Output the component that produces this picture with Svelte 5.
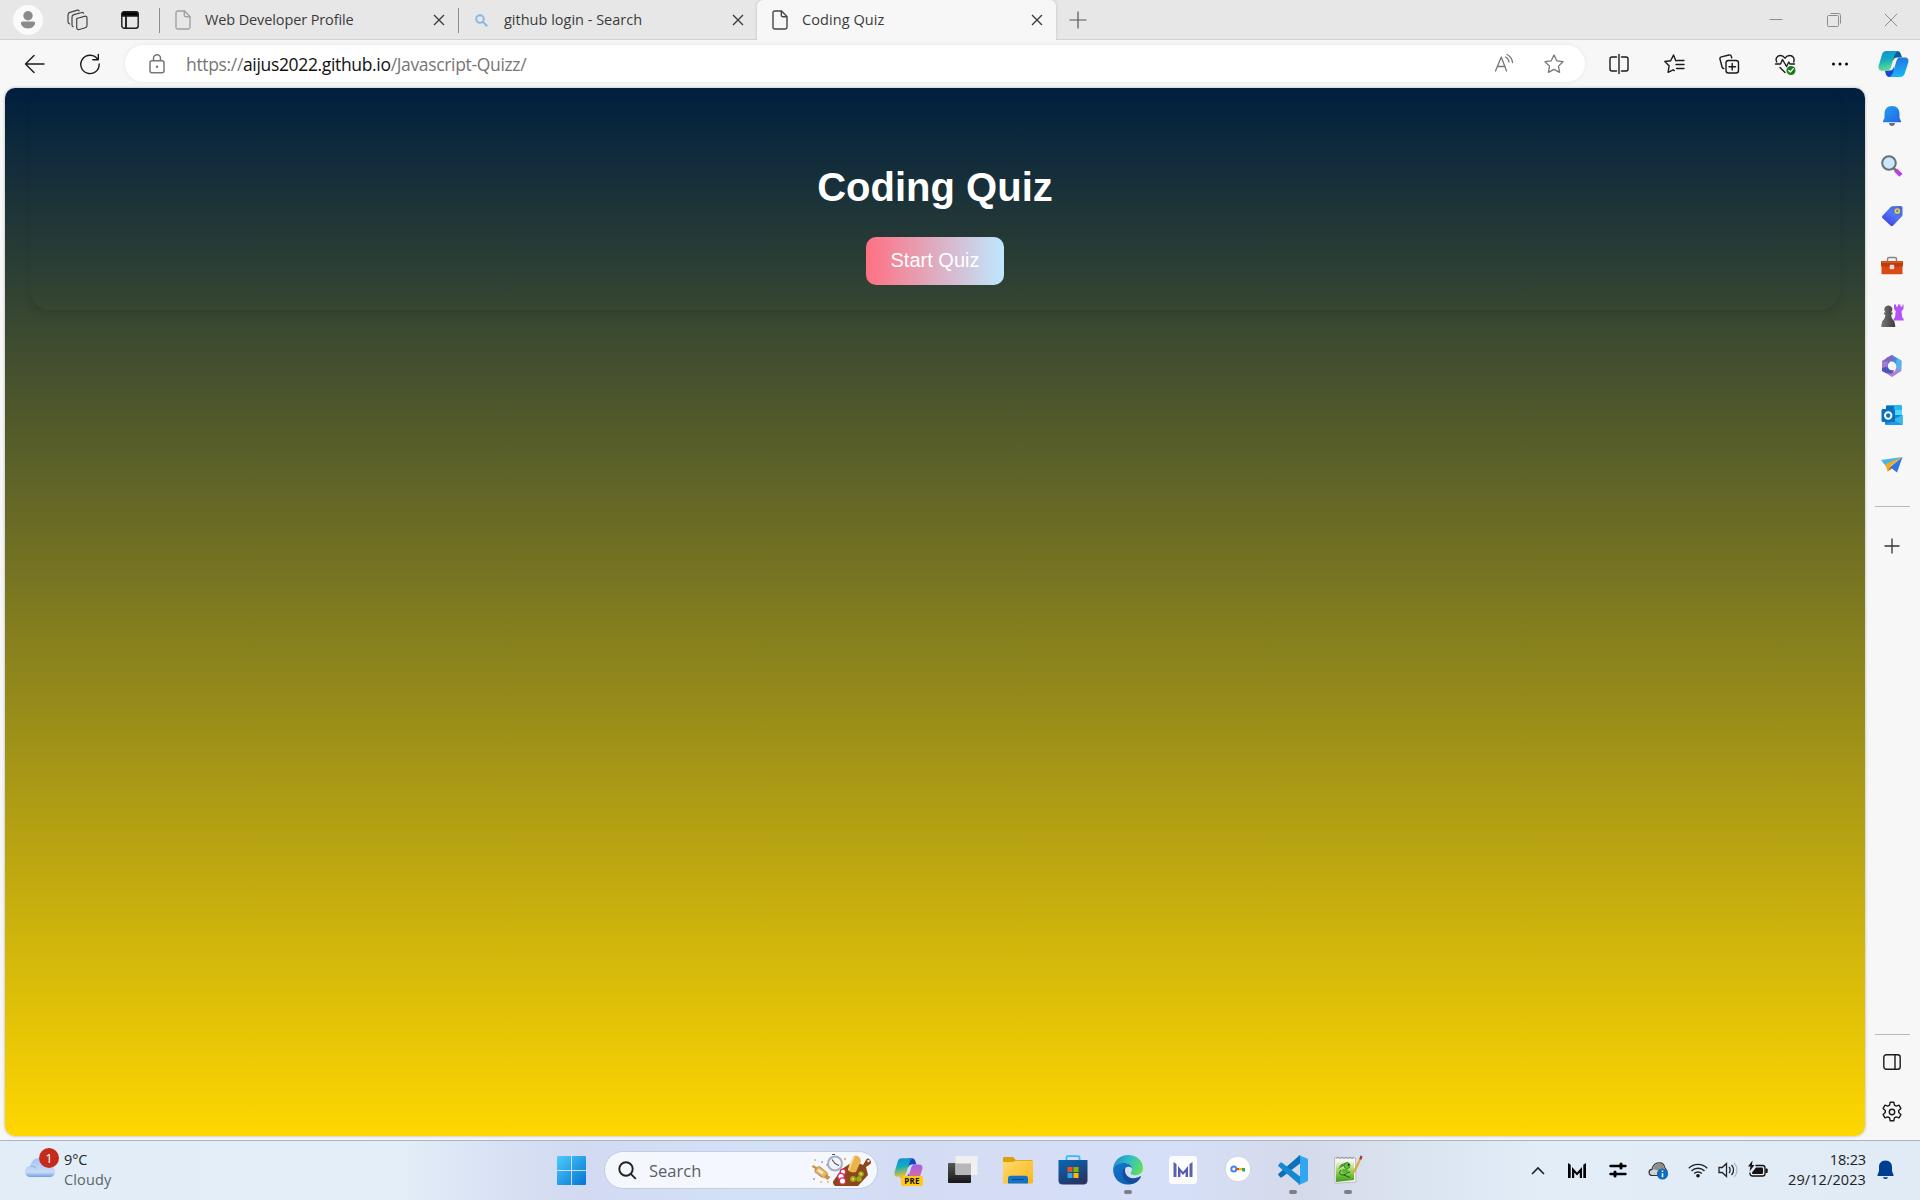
<script>
  const sideApps = ['bell', 'search', 'tag', 'tools', 'games', 'm365', 'outlook', 'send'];
  const apps = ['task', 'folder', 'store', 'edge', 'm', 'key', 'code', 'npp'];
  const running = ['edge', 'code', 'npp'];
</script>

{#snippet cross()}
  <svg class="cross" width="12" height="12" viewBox="0 0 12 12"><path d="M1 1l10 10M11 1L1 11" /></svg>
{/snippet}

{#snippet doc(light)}
  <svg class="doc" class:light width="16" height="20" viewBox="0 0 16 20">
    <path d="M2.7 1h6.8l5.5 5.5V17.3a1.7 1.7 0 0 1-1.7 1.7H2.7A1.7 1.7 0 0 1 1 17.3V2.7A1.7 1.7 0 0 1 2.7 1zM9.3 1v4.3a1.4 1.4 0 0 0 1.4 1.4H15" />
  </svg>
{/snippet}

{#snippet ribbon(p)}
  <svg width="31" height="28" viewBox="0 0 31 28">
    <defs>
      <linearGradient id="{p}a" x1="0" y1="0" x2="0.2" y2="1"><stop offset="0" stop-color="#168bd8" /><stop offset=".5" stop-color="#12adbf" /><stop offset="1" stop-color={p === 'pre' ? '#e8c02b' : '#62dd8c'} /></linearGradient>
      <linearGradient id="{p}b" x1=".4" y1="0" x2=".5" y2="1"><stop offset="0" stop-color={p === 'pre' ? '#9d63ee' : '#2473df'} /><stop offset="1" stop-color={p === 'pre' ? '#f0707c' : '#17b8f7'} /></linearGradient>
    </defs>
    <path d="M15 1h4c2.6 0 3.4 1.7 4 3.5l1 3h-4.7c-2.6 0-3.6 1.5-4.3 3.5z" fill={p === 'pre' ? '#1748bd' : '#0b5c94'} />
    <path d="M15.5 27h-4c-2.3 0-3.2-1.5-3.8-3.5l-.8-3h5c2.5 0 3.5-1.7 4.2-4z" fill="#1648d3" />
    <path d="M8.2 1h12C18 2 17 4 16 7l-3 10c-.7 2.5-2 3.8-4.5 3.8H4C.8 20.8 0 18 .8 15.3L4 4.5C4.700 2.200 6 1 8.200 1z" fill="url(#{p}a)" />
    <path d="M22 27H11.500c2.200-1 3-3 3.800-5.500l3-10.200C19 9 20.200 7.500 22.700 7.500H27c3.200 0 4 2.600 3.200 5.300l-3.500 10.700C26 25.700 24.500 27 22 27z" fill="url(#{p}b)" />
  </svg>
{/snippet}

{#snippet sideIcon(name)}
  <svg width="24" height="24" viewBox="0 0 24 24">
    {#if name === 'bell'}
      <defs><linearGradient id="sb" x2="1" y2="1"><stop stop-color="#22a2ee" /><stop offset="1" stop-color="#2463e4" /></linearGradient></defs>
      <path d="M9 19h6c0 4-6 4-6 0z" fill="#66707c" />
      <path d="M12 2c-5 0-7.500 3.500-7.500 8v4L3 17c-.2.700 0 1.300.8 1.300h16.400c.8 0 1-.6.8-1.300L19.500 14v-4C19.500 5.500 17 2 12 2z" fill="url(#sb)" />
    {:else if name === 'search'}
      <path d="M15.500 16l5.500 5.300" stroke="#c238f5" stroke-width="4.200" />
      <path d="M13.500 14l3 3" stroke="#777" stroke-width="2.500" />
      <circle cx="9" cy="9" r="6.800" fill="#c9e8fb" stroke="#6d6e72" stroke-width="2" />
    {:else if name === 'tag'}
      <defs><linearGradient id="st" x1="1" y1="0" x2=".3" y2="1"><stop stop-color="#3869dd" /><stop offset=".5" stop-color="#5076f5" /><stop offset="1" stop-color="#4140de" /></linearGradient></defs>
      <path d="M12.500 2.200l8-.2c1.300 0 2 .7 2 2v6.500c0 1-.2 1.500-1 2.200l-8.300 8.800c-.9 1-1.800 1-2.700.1l-7.800-7.400c-.9-.9-.9-1.800 0-2.700l8-8.500c.6-.6 1-.8 1.800-.8z" fill="url(#st)" />
      <circle cx="17.300" cy="7" r="2" fill="#5974cf" stroke="#f5ce35" stroke-width="1.700" />
    {:else if name === 'tools'}
      <path d="M7.500 7V5c0-1 .7-1.600 1.700-1.600h5.600c1 0 1.700.6 1.700 1.600v2" fill="none" stroke="#858585" stroke-width="1.500" />
      <rect x="1.500" y="11" width="21" height="9.300" rx="1" fill="#d94a15" />
      <path d="M2 7h20c.7 0 1 .4 1 1v4c-3 1.300-19 1.300-22 0V8c0-.6.3-1 1-1z" fill="#bd3b0d" />
      <path d="M2 7.500h20v1.300H2z" fill="#e56224" />
      <rect x="9.700" y="10.700" width="4.500" height="4.500" rx="1" fill="#ddd" />
    {:else if name === 'games'}
      <defs><linearGradient id="sg" x2="1"><stop stop-color="#777" /><stop offset="1" stop-color="#3d3d3d" /></linearGradient></defs>
      <path d="M14 .5h2v2h2v-2h2.500v2h2v-2h1V5l-2 2 .7 6.500c1.300.6 1.500 1.300 1.500 3H13.500c0-1.700.2-2.400 1.500-3l.7-6.500-1.700-2z" fill="#b652f3" />
      <path d="M8.300 1.500a4 4 0 0 1 2.800 7h1.400v2h-1.300c.1 3 1 5 3 6.500l1 4.500v1.500H1.300v-1.500l1-4.500c2-1.500 3-3.500 3-6.500H4v-2h1.500a4 4 0 0 1 2.800-7z" fill="url(#sg)" />
    {:else if name === 'm365'}
      <path d="M12 1l9.300 5.400v4.500L15.700 12 14 8.300 7 6.500 6 4z" fill="#428de0" />
      <path d="M21.300 7v10L12 23l-5.500-3.500 8.500-2.300 2-6.400z" fill="#b17bd6" />
      <path d="M12 1L2 7v6l6 3 2-8.500 4-2z" fill="#8064c6" />
      <path d="M2 12v5l4 2.200 6 .4 2-3.600-6-2z" fill="#4c55ba" />
      <path d="M2 7.500V14l5-1.500 1-5z" fill="#a57bd2" />
      <path d="M17 4l4.300 2.700V15l-3.500 2.500L16 9z" fill="#56b5e8" />
      <circle cx="12" cy="12" r="4.200" fill="#f7f7f7" />
    {:else if name === 'outlook'}
      <rect x="6" y="1" width="16" height="11" rx="1.200" fill="#27b7ee" />
      <path d="M6 2h8v5H6z" fill="#0f6db9" /><path d="M14 6h8v6h-8z" fill="#4fd9ff" />
      <path d="M5 11h17.500v9.800H5z" fill="#1588d3" /><path d="M12 16l10.500-5v9.800z" fill="#35b9ee" /><path d="M14 16l8.500 5H6z" fill="#1c9ce3" />
      <rect x="1.500" y="5" width="13.500" height="13" rx="1.500" fill="#0970c4" />
      <circle cx="8.200" cy="11.500" r="3.200" fill="none" stroke="#fff" stroke-width="2" />
    {:else}
      <path d="M1 6L22.500 3 6.500 13z" fill="#40b8ed" /><path d="M22.500 3L17 18.500 10 13z" fill="#2d75e4" />
      <path d="M22.500 3L5.500 10l2 7.500L10.500 12z" fill="#f5a91b" /><path d="M7.500 17.500l4.500-3-1.800-2z" fill="#b76a0d" />
    {/if}
  </svg>
{/snippet}

{#snippet appIcon(name)}
  <svg width="30" height="30" viewBox="0 0 30 30">
    {#if name === 'task'}
      <defs><linearGradient id="tk" x1="0" y1="0" x2="0" y2="1"><stop stop-color="#565656" /><stop offset="1" stop-color="#171717" /></linearGradient></defs>
      <rect x="0" y="8" width="23" height="20" rx="1" fill="url(#tk)" />
      <rect x="7.500" y="1" width="22" height="19" rx="1" fill="#f0f0f0" />
      <path d="M7.500 8.500H23V20H8.500a1 1 0 0 1-1-1z" fill="#b7b7b7" />
    {:else if name === 'folder'}
      <defs><linearGradient id="fo" x2="1" y2="1"><stop stop-color="#ffdb70" /><stop offset="1" stop-color="#fdb517" /></linearGradient></defs>
      <path d="M0 3.500C0 2.500.6 2 1.500 2H9c1 0 1.500.3 2.100 1l1.600 2H28c1 0 2 .5 2 1.500V12H0z" fill="#dca008" />
      <path d="M0 8c0-.6.4-1 1-1h8.500c1 0 1.600-.2 2.400-.8l.6-.4H29c.6 0 1 .4 1 1V27c0 .9-.5 1.500-1.500 1.500h-27C.5 28.500 0 28 0 27z" fill="url(#fo)" />
      <path d="M5 28.500V23.500c0-1.700 1-2.700 2.700-2.700h14.600c1.700 0 2.700 1 2.700 2.700v5z" fill="#1174c9" /><path d="M9 24.500h12" stroke="#0a4b8d" stroke-width="1.200" />
    {:else if name === 'store'}
      <defs><linearGradient id="so" y2="1" x2=".5"><stop stop-color="#0868b8" /><stop offset="1" stop-color="#263563" /></linearGradient></defs>
      <path d="M8.500 6V2.500c0-.8.5-1.300 1.300-1.300h10.400c.8 0 1.300.5 1.300 1.300V6" fill="none" stroke="#33bdf2" stroke-width="1.800" />
      <path d="M.5 5h29v20.500c0 2.500-1.500 4-4 4h-21c-2.500 0-4-1.500-4-4z" fill="url(#so)" />
      <path d="M9.500 12h5v5h-5z" fill="#f25022" /><path d="M15.500 12h5v5h-5z" fill="#7fba00" /><path d="M9.500 18h5v5h-5z" fill="#28a8ea" /><path d="M15.500 18h5v5h-5z" fill="#ffb901" />
    {:else if name === 'edge'}
      <defs>
        <linearGradient id="e1" x1="0" y1=".3" x2="1" y2=".6"><stop stop-color="#238fcf" /><stop offset=".5" stop-color="#32bfc3" /><stop offset="1" stop-color="#62df57" /></linearGradient>
        <linearGradient id="e2" x1="0" y1="0" x2=".6" y2="1"><stop stop-color="#1475cb" /><stop offset="1" stop-color="#0b61b5" /></linearGradient>
      </defs>
      <path d="M.2 13.500C1 5.500 7 0 15 0c9 0 15 6 15 13 0 4.500-3.300 7.200-7.600 7.200-3.300 0-5.300-1.200-4.800-2.700.8-.8 1.500-2 1.500-3.500 0-3.500-3.500-6-7.500-6C6.700 8 2.500 10.500.2 13.500z" fill="url(#e1)" />
      <path d="M.2 13.500C2 10 6.500 8 11.200 8c4.500 0 7.900 2.500 7.900 6 0 0-.9-2.200-3.600-2.200-4.500 0-7 6.200-3.300 11.200 2.300 3.200 6.500 5.300 11 4.200C12.500 33.500-.8 26.500.2 13.500z" fill="url(#e2)" />
      <path d="M9.500 18c0-2 1-4.600 3-5.500-2 5.500 2 10.700 7.500 10.700 3.500 0 5.500-1 7-1.900.6-.3 1.200.3.800.9C25.500 27 19.500 30.300 15.500 28 11.500 26.500 9.500 22 9.500 18z" fill="#124e9b" />
    {:else if name === 'm'}
      <rect x="1" y="1" width="28" height="28" rx="3.500" fill="#fcfcfe" />
      <path d="M5.500 7l3 2v13h-3zM24.500 7l-3 2v13h3z" fill="#5a61ad" /><path d="M10 22V11l5 6 5-6v11h-2.400v-5L15 20l-2.600-3v5z" fill="#5459ab" />
    {:else if name === 'key'}
      <circle cx="15" cy="14" r="12.700" fill="#fff" stroke="#c6cad5" stroke-width=".7" />
      <circle cx="10.800" cy="14" r="2.500" fill="none" stroke="#4285f4" stroke-width="2" />
      <path d="M13.500 13h3v2.200h-3z" fill="#ea4335" /><path d="M16 13h3v2.200h-3z" fill="#fbbc05" /><path d="M19 13h3v3.500h-2.800z" fill="#34a853" />
    {:else if name === 'code'}
      <path d="M22 0v8.500L4 22.200c-.6.500-1.300.5-1.800 0L.7 20.600c-.7-.6-.7-1.400 0-2z" fill="#0b6fb9" />
      <path d="M22 30v-8.500L4 7.800c-.6-.5-1.300-.5-1.800 0L.7 9.400c-.7.600-.7 1.400 0 2z" fill="#1489d2" />
      <path d="M21.500.2L29 3.500c.7.300 1 .8 1 1.500v20c0 .7-.3 1.200-1 1.500l-7.500 3.300c-.8.300-1.500 0-2-.6 1 .6 2.500 0 2.500-1.200V2c0-1.200-1.500-1.800-2.500-1.200.5-.6 1.200-.9 2-.6z" fill="#31a7f1" />
    {:else}
      <defs><linearGradient id="np" y2="1" x2="0"><stop stop-color="#e8f5d8" /><stop offset=".5" stop-color="#8fd04e" /><stop offset="1" stop-color="#3f9a1c" /></linearGradient></defs>
      <path d="M1.500 3h21l.5 24-21 1.300z" fill="#f5f5f2" stroke="#9c9c99" stroke-width=".6" />
      <path d="M3 7h18v18L3 27z" fill="url(#np)" />
      <path d="M6 13.500c2-3 6-4 9.500-2.500M8 15c-2 2-2 5 2 5 4-.3 3-3 7-3M7 11.500c2-3 5-3 7-1.500M11 20l6 2.500" fill="none" stroke="#1f5a18" stroke-width="1" />
      <circle cx="14" cy="10.500" r="3" fill="#63c43c" stroke="#24691b" stroke-width=".7" /><circle cx="15.500" cy="9.800" r=".9" fill="#111" />
      <path d="M9 14.500c2-1 5-1 6 .5s-2 3-4 3-3-2-2-3.500z" fill="#55b832" />
      <path d="M3 3l2-1 2 1.500L9 2l2 1.500L13 2l2 1.500L17 2l2 1.500L21 2" stroke="#888" fill="none" stroke-width=".8" />
      <path d="M19.500 20l1-4.500L26.500 3l2 .8-6 13z" fill="#e3a43f" /><path d="M26.300 4L27.500.5l2 .8-1 3.500z" fill="#913d36" />
    {/if}
  </svg>
{/snippet}

<div class="screen">
  <header class="tabs">
    <div class="tools">
      <span class="avatar"><svg width="30" height="30" viewBox="0 0 30 30"><circle cx="15" cy="10.700" r="4.700" /><path d="M9.700 16.500h10.600c1.300 0 1.900.7 1.700 1.800-.4 3.200-3.200 5.200-7 5.200s-6.600-2-7-5.200c-.2-1.100.4-1.800 1.700-1.800z" /></svg></span>
      <svg class="line-icon soft" width="22" height="22" viewBox="0 0 22 22"><path d="M9.700 9.500l7.800-2.200c1.600-.4 2.500.3 2.500 1.800v7.400c0 1.200-.5 1.900-1.700 2.200l-6 1.800c-1.600.4-2.600-.3-2.600-1.900zM6.200 17.700c-.8-.3-1.200-.9-1.200-1.800V8.200c0-1.400.6-2.200 1.900-2.500L15 3.500q1-.2 1.600.8M2.700 15C1.500 14.500 1 13.900 1 12.800V6C1 4.500 1.600 3.700 2.900 3.400L10.500 1.200q1-.2 1.600.7" /></svg>
      <svg class="line-icon panel" width="18" height="18" viewBox="0 0 18 18"><rect x=".8" y=".8" width="16.400" height="16.400" rx="2.500" /><path class="fill" d="M1 5V3a2 2 0 0 1 2-2h12a2 2 0 0 1 2 2v2zM4.800 5v12h.4V5z" /></svg>
    </div>
    <div class="tab first">{@render doc(true)}<span class="title t1">Web Developer Profile</span>{@render cross()}</div>
    <div class="tab second">
      <svg class="mag" width="13" height="13" viewBox="0 0 13 13"><circle cx="5" cy="5" r="3.800" /><path d="M8 8l4.300 4.300" /></svg>
      <span class="title t2">github login - Search</span>{@render cross()}
    </div>
    <div class="tab active">{@render doc(false)}<span class="title t3">Coding Quiz</span>{@render cross()}</div>
    <svg class="plus" width="18" height="18" viewBox="0 0 18 18"><path d="M9 .5v17M.5 9h17" /></svg>
    <div class="window">
      <svg width="14" height="14" viewBox="0 0 14 14"><path d="M.5 6.500h13" /></svg>
      <svg width="14" height="14" viewBox="0 0 14 14"><rect x=".5" y="2.500" width="11" height="11" rx="1" /><path d="M3.500.5h8a2 2 0 0 1 2 2v8" /></svg>
      <svg width="14" height="14" viewBox="0 0 14 14"><path d="M.8.8l12.400 12.400M13.200.8L.8 13.200" /></svg>
    </div>
  </header>

  <nav class="toolbar">
    <svg class="line-icon" width="20" height="20" viewBox="0 0 20 20"><path d="M9 1.500L.5 10 9 18.500M.5 10H19" /></svg>
    <svg class="line-icon reload" width="20" height="20" viewBox="0 0 20 20"><path d="M17.800 5.500A9.200 9.200 0 1 0 19.200 10M18.300.5v5.300h-5.500" /></svg>
    <div class="address">
      <svg class="line-icon grey lock" width="16" height="20" viewBox="0 0 16 20"><rect x="1" y="6.700" width="14" height="12" rx="2" /><path d="M4.500 6.500V4.300a3.500 3.500 0 0 1 7 0v2.200" /><circle class="dot" cx="8" cy="12.700" r="1.200" /></svg>
      <span class="url">https://<b>aijus2022.github.io</b>/Javascript-Quizz/</span>
      <svg class="line-icon grey" width="20" height="20" viewBox="0 0 20 20"><path d="M1.500 17L7.300 3 12.500 17M3.500 12.500h7.500M11.500 3c2 .8 3 2.300 3.500 5M13 .5c3.300 1.500 5 4 5.500 8" /></svg>
      <svg class="line-icon grey" width="20" height="20" viewBox="0 0 20 20"><path d="M10 1l2.800 5.800 6.200.9-4.500 4.400 1.100 6.200L10 15.400l-5.600 2.900 1.100-6.200L1 7.700l6.200-.9z" /></svg>
    </div>
    <div class="actions">
      <svg class="line-icon" width="20" height="20" viewBox="0 0 20 20"><path d="M7.500 3H3a2 2 0 0 0-2 2v10a2 2 0 0 0 2 2h4.500M12.500 3H17a2 2 0 0 1 2 2v10a2 2 0 0 1-2 2h-4.500M10 .5v19" /></svg>
      <svg class="line-icon" width="20" height="20" viewBox="0 0 20 20"><path d="M12.500 6.800h-.7L9.500 1 6.700 6.700.8 7.500l4.300 4.300-1 6.500 5-2.500 1.200.8M13.500 6.500H20M12 10.500h8M12.500 14.500H20" /></svg>
      <svg class="line-icon" width="20" height="20" viewBox="0 0 20 20"><rect x="7" y="6.500" width="12.500" height="12.500" rx="2.500" /><path d="M13.200 9.500v6.500M10 12.700h6.500M4.800 14.500c-.9-.1-1.500-.7-1.700-1.500L1 5.300c-.3-1.200.2-2.100 1.400-2.400L10 1c1.100-.3 1.900.1 2.300 1.300l.4 1.500" /></svg>
      <svg class="line-icon" width="21" height="21" viewBox="0 0 21 21"><path d="M1.800 8C0 5 2 1.500 5.300 1.500c2.200 0 3.500 1 4.700 2.700 1.200-1.700 2.500-2.700 4.700-2.700 3.200 0 5.300 3 4 6.500M.5 10h5l2-4.500 4 7 2.300-4.500 1.200 2h4.500M5 13.500l5 5" /><circle class="ok" cx="16" cy="16.500" r="4.500" /><path class="tick" d="M13.800 16.500l1.500 1.500 3-3.200" /></svg>
      <svg width="18" height="6" viewBox="0 0 18 6"><circle cx="2.500" cy="3" r="1.500" /><circle cx="9" cy="3" r="1.500" /><circle cx="15.500" cy="3" r="1.500" /></svg>
    </div>
    <span class="copilot">{@render ribbon('top')}</span>
  </nav>

  <div class="body">
    <main class="page">
      <section class="card">
        <h1>Coding Quiz</h1>
        <button>Start Quiz</button>
      </section>
    </main>
    <aside class="side">
      {#each sideApps as name}<span class="slot">{@render sideIcon(name)}</span>{/each}
      <hr />
      <svg class="add" width="16" height="16" viewBox="0 0 16 16"><path d="M8 .5v15M.5 8h15" /></svg>
      <div class="bottom">
        <hr />
        <span class="slot"><svg class="line-icon" width="18" height="16" viewBox="0 0 18 16"><rect x=".8" y=".8" width="16.400" height="14.400" rx="2.500" /><path d="M12 1v14" /></svg></span>
        <span class="slot"><svg class="line-icon" width="22" height="22" viewBox="0 0 22 22"><circle cx="11" cy="11" r="2.700" /><path d="M9.200 1.200h3.600l.6 2.900 1.800 1 2.800-.9 1.900 3.200-2.200 2v2.200l2.200 2-1.900 3.200-2.800-.9-1.800 1-.6 2.900H9.200l-.6-2.900-1.800-1-2.800.9-1.900-3.200 2.200-2v-2.200l-2.200-2L4 4.200l2.800.9 1.800-1z" /></svg></span>
      </div>
    </aside>
  </div>

  <footer class="taskbar">
    <div class="weather">
      <svg width="32" height="32" viewBox="0 0 32 32">
        <defs><linearGradient id="cl" x1="0" y1="0" x2="0" y2="1"><stop stop-color="#a5c4f3" /><stop offset=".75" stop-color="#c8dbf6" /><stop offset="1" stop-color="#719ce9" /></linearGradient></defs>
        <path d="M6.500 29C3 29 1 26.500 1 23.500 1 20.500 3.200 18 6.500 18 7 13 10.500 10 15.500 10c5 0 8.500 3.500 9 8 3.500 0 6.500 2.300 6.500 5.500 0 3.300-2 5.500-5.500 5.500z" fill="url(#cl)" />
        <path d="M6.500 18c3 0 4.500 1 5.500 2.500" fill="none" stroke="#87a9e6" />
      </svg>
      <span class="badge">1</span>
      <div class="wtext"><span>9°C</span><span class="dim">Cloudy</span></div>
    </div>

    <div class="dock">
      <svg class="start" width="29" height="29" viewBox="0 0 29 29">
        <defs><linearGradient id="wn" gradientUnits="userSpaceOnUse" x1="0" y1="0" x2="29" y2="29"><stop stop-color="#4ccbfc" /><stop offset="1" stop-color="#0474d2" /></linearGradient></defs>
        <path d="M1 0h13v14H0V1q0-1 1-1zM15 0h13q1 0 1 1v13H15zM0 15h14v14H1q-1 0-1-1zM15 15h14v13q0 1-1 1H15z" fill="url(#wn)" />
      </svg>
      <div class="searchbox">
        <svg class="lens" width="19" height="19" viewBox="0 0 19 19"><circle cx="8" cy="8" r="6.700" /><path d="M12.800 12.800l5 5" /></svg>
        <span>Search</span>
        <svg class="treats" width="62" height="33" viewBox="0 0 62 33">
          <path d="M2 11l3.500 2 3-1 8 6.500.500 3 2.500 1.500-3 3-2.500-2-3.500-.5-7-5.500.3-3.500-3-1.500z" fill="#c98f47" /><path d="M7 12.500l9 6.500-3 4.500-8.500-6z" fill="#e8b96d" /><path d="M8 15l4.500 3.300-1 2.200-5-3.500z" fill="#f7ead0" />
          <g fill="#e9b657"><circle cx="4" cy="6" r="1" /><circle cx="10" cy="28" r="1" /><circle cx="34" cy="5" r="1.200" /><circle cx="17" cy="28" r="1" /></g><g fill="#a995c8"><circle cx="11" cy="8" r="1" /><circle cx="3" cy="25" r="1" /><circle cx="16" cy="11" r="1" /></g>
          <path d="M31 15l12-8 9 4 3-5c1-2 3-2 4 0 2 2 1 4-1 5l-3 2 2 8-10 11H24c-2-2-3-4-1-6z" fill="#8b4717" /><circle cx="57.500" cy="7" r="1.200" fill="#f4edf1" />
          <path d="M37 16l6-14c4-1 6 1 7 5l-5 11c-3 1-7 0-8-2z" fill="#e9b150" /><path d="M43 3c-2.500 5-4.500 9-5 13" stroke="#f7d88c" stroke-width="2" fill="none" />
          <circle cx="24" cy="9.500" r="7" fill="#f1f4fa" stroke="#a8acc5" stroke-width="2" /><path d="M24 9.500l-3-4M24 9.500l4 2M21 .5h3" stroke="#4d506e" stroke-width="1.200" />
          <g fill="#fff" stroke="#d82d5d" stroke-width="1.300"><circle cx="32" cy="18" r="2.800" /><circle cx="30" cy="22.500" r="3.200" /><circle cx="31.500" cy="27" r="3.200" /></g>
          <g fill="#9da51b"><circle cx="42" cy="25" r="3" /><circle cx="48" cy="25" r="2.800" /><circle cx="50" cy="20" r="2.800" /></g><g fill="#dfcf58"><circle cx="42" cy="25" r="1.200" /><circle cx="50" cy="20" r="1.200" /></g>
        </svg>
      </div>
      <span class="pre">{@render ribbon('pre')}<em>PRE</em></span>
      {#each apps as name}
        <span class="app">{@render appIcon(name)}{#if running.includes(name)}<i></i>{/if}</span>
      {/each}
    </div>

    <div class="tray">
      <svg class="chev" width="14" height="9" viewBox="0 0 14 9"><path d="M1 8l6-6 6 6" /></svg>
      <svg class="tm" width="18" height="15" viewBox="0 0 18 15"><path d="M0 0l2.700 1.800V15H0zM18 0l-2.700 1.800V15H18zM4 15V4l5 5.500L14 4v11h-2.200V9.500L9 12.500 6.200 9.500V15z" /></svg>
      <svg class="sw" width="18" height="16" viewBox="0 0 18 16"><path d="M1.500 4h15M1.500 12h15" /><path class="thick" d="M12 2v4M6 10v4" /></svg>
      <svg class="cloud" width="21" height="19" viewBox="0 0 21 19"><path d="M4.500 14.500C0 14.500 0 8.500 4 8.300 4.500 4 8 1.500 11 2c3-.3 5 1.500 5.700 4.500L19 10l-6 4.500z" fill="#d2d2d2" stroke="#333" stroke-width="1.200" /><path d="M5 8C6 3.500 9 2 12 2.500c2.500 0 4.500 2.500 4.500 5L10 9.500z" fill="#8e8e8e" /><circle cx="14.500" cy="13" r="5.600" fill="#0f6cbd" /><path d="M14.500 12.200v4M14.500 9.500v1.400" stroke="#fff" stroke-width="1.500" /></svg>
      <svg class="wifi" width="20" height="16" viewBox="0 0 20 16"><path d="M.8 6.200a13 13 0 0 1 18.400 0M3.500 8.900a9.200 9.200 0 0 1 13 0M6.200 11.500a5.400 5.400 0 0 1 7.600 0" /><circle cx="10" cy="13.700" r="1.800" /></svg>
      <svg class="vol" width="20" height="16" viewBox="0 0 20 16"><path d="M1 5.500h3.200L8.500 1.500v13L4.200 10.500H1zM11 5c1.500 1.500 1.500 4.500 0 6M13.500 3c2.700 2.700 2.700 7.300 0 10" /><path class="faint" d="M16 1c4 4 4 10 0 14" /></svg>
      <svg class="bat" width="20" height="16" viewBox="0 0 20 16"><path d="M7.500 3.500h7.200a2.300 2.300 0 0 1 2.300 2.300v5.900a2.300 2.300 0 0 1-2.300 2.300H4.300A2.300 2.300 0 0 1 2 11.700V10.500" fill="none" stroke="#111" stroke-width="1.300" /><path d="M8 5.500h6q1 0 1 1v4.500q0 1-1 1H5q-1 0-1-1V10.500z" /><path d="M17.500 6.500h1.200q1 0 1 1v2.500q0 1-1 1h-1.200z" /><path d="M4.500-1.500L0 4.500h2.500L1.500 9.500 6.500 3H4z" /></svg>
      <div class="clock"><span>18:23</span><span class="date">29/12/2023</span></div>
      <svg class="bell" width="17" height="20" viewBox="0 0 17 20"><path d="M8.500.5C4 .5 2 3.500 2 7v4L.5 15c-.2.600 0 1 .7 1h14.600c.7 0 .9-.4.7-1L15 11V7C15 3.500 13 .5 8.500.5zM6 17.200h5c-.5 2.400-4.500 2.400-5 0z" /></svg>
    </div>
  </footer>
</div>

<style>
  :global(body) { margin: 0; overflow: hidden; }
  .screen { width: 1920px; height: 1200px; display: flex; flex-direction: column; background: #f7f7f7; font-family: 'Open Sans', 'Noto Sans', sans-serif; color: #3b3b3b; overflow: hidden; }
  svg { display: block; flex: none; overflow: visible; }
  .screen * { box-sizing: border-box; }
  .line-icon { fill: none; stroke: #1b1b1b; stroke-width: 1.4; stroke-linejoin: round; stroke-linecap: round; }
  .soft { stroke: #444; stroke-width: 1.2; }
  .grey { stroke: #767676; stroke-width: 1.3; }
  .lock { stroke-width: 1.5; }
  .dot { fill: #767676; stroke: none; }
  .fill { fill: #000; }

  .tabs { height: 40px; flex: none; display: flex; align-items: center; background: #e7e7e7; box-shadow: inset 0 -1px #d2d2d2; }
  .tools { width: 158px; display: flex; align-items: center; padding-left: 13px; }
  .avatar { width: 30px; height: 30px; border-radius: 50%; background: #fafafa; fill: #8b8b8b; margin-right: 24px; }
  .panel { margin-left: 32px; }
  .tab { height: 40px; display: flex; align-items: center; font-size: 14.5px; white-space: nowrap; }
  .title { flex: 1; line-height: 40px; }
  .first { width: 299px; padding: 0 12px 0 17px; background: linear-gradient(#8b8b8b, #8b8b8b) 1px 8px / 1px 25px no-repeat; }
  .second { width: 300px; padding: 0 13px 0 18px; background: linear-gradient(#8b8b8b, #8b8b8b) 1px 8px / 1px 25px no-repeat; }
  .active { width: 299px; padding: 0 13px 0 15px; background: #f7f7f7; border-radius: 6px 6px 0 0; box-shadow: 0 0 3px #bdbdbd; clip-path: inset(0 -4px 0 -4px); }
  .t1 { margin-left: 14px; letter-spacing: -.12px; }
  .t2 { margin-left: 16px; letter-spacing: 0; }
  .t3 { margin-left: 14px; letter-spacing: .08px; }
  .cross { stroke: #3c3c3c; stroke-width: 1.4; }
  .doc { fill: none; stroke: #454545; stroke-width: 1.4; }
  .light { stroke: #a1a1a1; }
  .mag { fill: none; stroke: #8bb9e2; stroke-width: 2; }
  .plus { margin-left: 13px; stroke: #555; stroke-width: 1.2; }
  .window { margin-left: auto; display: flex; gap: 43.5px; padding-right: 22px; fill: none; stroke: #8d8d8d; stroke-width: 1; }

  .toolbar { height: 48px; flex: none; display: flex; align-items: center; padding-left: 25px; }
  .reload { margin-left: 35px; }
  .address { width: 1460px; height: 37px; margin: -1px 0 0 25px; border-radius: 19px; background: #fff; box-shadow: 0 0 4px #e6e6e6; display: flex; align-items: center; padding: 0 21px 0 24px; gap: 30px; }
  .url { flex: 1; margin-left: -9px; font-size: 17.5px; line-height: 36px; color: #767676; letter-spacing: -.34px; }
  .url b { font-weight: 400; color: #111; }
  .actions { display: flex; align-items: center; gap: 35.2px; margin-left: 24px; }
  .ok { fill: #127d19; stroke: none; }
  .tick { stroke: #fff; stroke-width: 1.3; }
  .copilot { margin-left: 29px; }

  .body { height: 1052px; flex: none; display: flex; }
  .page { width: 1860px; height: 1048px; margin-left: 5px; padding: 0 25px; border-radius: 10px; background: linear-gradient(#001f3f, #ffd700); box-shadow: 0 0 3px #aaa; }
  .card { height: 222px; border-radius: 20px; box-shadow: 0 5px 10px rgba(0, 0, 0, .1); text-align: center; padding-top: 75px; clip-path: inset(0 -20px -20px -20px); font-family: 'Liberation Sans', Arial, sans-serif; color: #fff; }
  h1 { margin: 0; font-size: 40px; line-height: 48px; }
  button { display: block; width: 138px; height: 48px; margin: 26px auto 0; padding: 0 0 2px; border: 0; border-radius: 10px; color: #fff; font: 20px 'Liberation Sans', Arial, sans-serif; background: linear-gradient(to right, #ff7082, #bee8ff); }

  .side { width: 54px; height: 1052px; display: flex; flex-direction: column; align-items: center; padding-top: 3px; }
  .slot { height: 50px; display: grid; place-items: center; }
  hr { width: 35px; height: 1px; margin: 0; border: 0; background: #b9b9b9; }
  .side > hr { margin-top: 15px; }
  .add { margin-top: 31px; stroke: #333; stroke-width: 1.3; }
  .bottom { margin-top: auto; padding-bottom: 3px; }
  .bottom hr { margin-bottom: 2px; }

  .taskbar { height: 60px; display: grid; grid-template-columns: 557px 1fr 400px; border-top: 1px solid #abb5c1; background: linear-gradient(90deg, #e2edf7 0, #e3eef8 400px, #d8e0f4 510px, #d2daf2 580px, #d3e1f7 760px, #d4dcf3 900px, #d5dff7 1180px, #d5daea 1300px, #dce6f2 1440px, #e2edf8 1540px, #e0ebf6 100%); }
  .weather { display: flex; position: relative; padding: 7px 0 0 24px; }
  .badge { position: absolute; left: 39px; top: 7px; width: 20px; height: 20px; border-radius: 50%; background: #c42b1c; color: #fff; font-size: 13px; line-height: 20px; text-align: center; }
  .wtext { display: flex; flex-direction: column; margin-left: 8px; font-size: 14.5px; line-height: 20px; padding-top: 2px; letter-spacing: -.1px; color: #262626; }
  .dim { color: #606468; letter-spacing: .15px; }
  .dock { display: flex; align-items: center; height: 58px; }
  .searchbox { width: 274px; height: 38px; margin: 0 16px 0 18px; padding: 0 4px 0 13px; border-radius: 19px; background: #f4f7fd; border: 1px solid #c5cce3; display: flex; align-items: center; font-size: 16.5px; color: #5b5e64; }
  .searchbox span { flex: 1; margin-left: 12px; }
  .lens { fill: none; stroke: #222; stroke-width: 1.9; }
  .pre { position: relative; width: 30px; margin-right: 24px; }
  .pre svg { width: 29px; height: 27px; }
  .pre em { position: absolute; left: 7px; top: 19px; width: 22px; height: 10px; border-radius: 2px; background: #ffc914; color: #111; font: 700 8px/10px 'Open Sans', sans-serif; text-align: center; letter-spacing: .3px; }
  .app { position: relative; width: 30px; height: 30px; margin-right: 25px; flex: none; }
  .app i { position: absolute; left: 11px; top: 35px; width: 8px; height: 4px; border-radius: 2px; background: #7c7f88; }

  .tray { display: flex; align-items: center; height: 58px; padding-left: 11px; }
  .chev { fill: none; stroke: #222; stroke-width: 1.6; }
  .tm { margin-left: 23px; }
  .sw { margin-left: 23px; stroke: #000; stroke-width: 2.4; stroke-linecap: round; }
  .thick { stroke-width: 3; }
  .cloud { margin-left: 21px; }
  .wifi { margin-left: 19px; fill: none; stroke: #222; stroke-width: 1.4; }
  .wifi circle { fill: #111; stroke: none; }
  .vol { margin-left: 10px; fill: none; stroke: #222; stroke-width: 1.3; }
  .faint { stroke: #b0b8c0; }
  .bat { margin-left: 10px; fill: #111; }
  .clock { width: 98px; display: flex; flex-direction: column; text-align: right; font-size: 14.5px; line-height: 20px; color: #222; letter-spacing: -.15px; }
  .date { letter-spacing: .1px; }
  .bell { margin-left: 11px; fill: #003e92; }
</style>
